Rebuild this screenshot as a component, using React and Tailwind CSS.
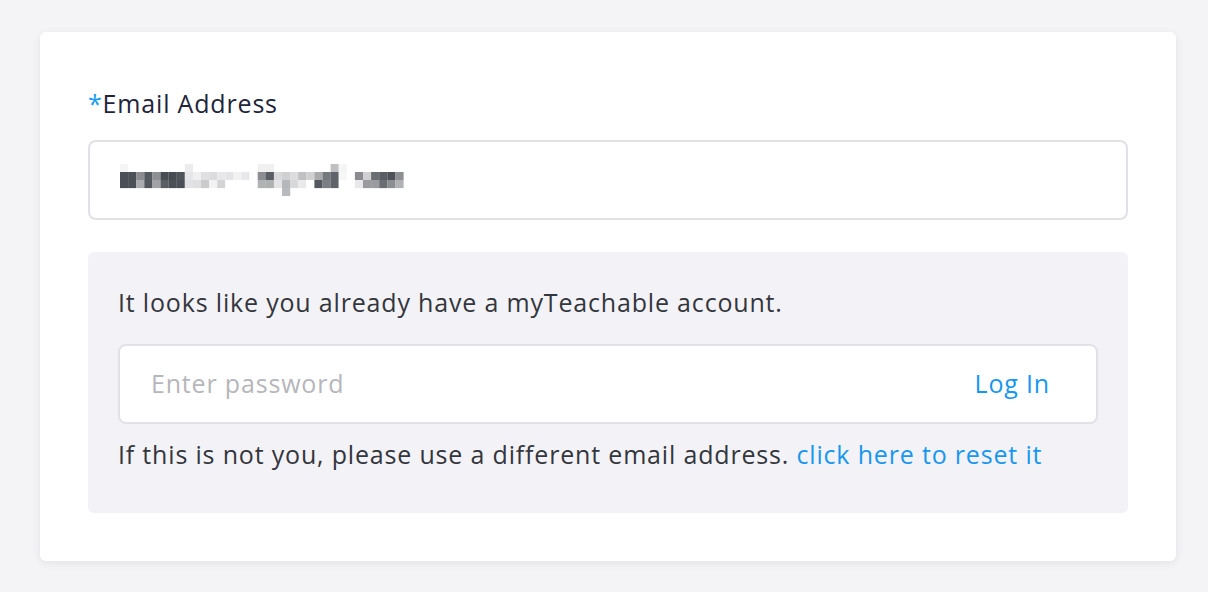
import React from 'react';

// blurred email, drawn as the mosaic it is in the screenshot
const mosaic = [
  { row: 0, cells: { 0: '#f5f5f5', 8: '#ececee', 17: '#f0f0f0', 18: '#f0f0f0', 26: '#c0c0c2', 27: '#f5f5f5' } },
  {
    row: 1,
    cells: ['#4b4f57', '#4b4f57', '#8a8c90', '#555960', '#8d8f93', '#474b53', '#474b53', '#50545b', '#e6e6e8', '#f0f0f1', '#e0e0e2', '#dcdcde', '#e8e8ea', '#e4e4e6', '#f2f2f3', '#e8e8ea', '#ffffff', '#8b8d90', '#5a5e64', '#d8d8da', '#d0d0d2', '#dcdcde', '#c0c0c2', '#d0d0d2', '#aaaaac', '#75787c', '#60646a', '#f7f7f7', '#ffffff', '#8a8c90', '#d0d0d2', '#6a6d72', '#5a5e64', '#4e5258', '#8d8f93'],
  },
  {
    row: 2,
    cells: ['#4b4f57', '#4b4f57', '#a9abae', '#53575e', '#a0a2a5', '#5a5e64', '#4b4f57', '#4b4f57', '#e2e2e4', '#e0e0e2', '#cbcbcd', '#f2f2f2', '#d4d4d6', '#ffffff', '#ffffff', '#ffffff', '#ffffff', '#b0b2b4', '#aeb0b2', '#e4e4e6', '#b6b7ba', '#d8d8da', '#eaeaeb', '#ffffff', '#55595f', '#7b7e82', '#5f6368', '#ffffff', '#ffffff', '#e8e8ea', '#999b9e', '#9a9c9f', '#6a6d72', '#8c8e92', '#b0b2b4'],
  },
  { row: 3, cells: { 20: '#b9babd' } },
];

function BlurredEmail() {
  const rects = [];
  mosaic.forEach(({ row, cells }) => {
    Object.entries(cells).forEach(([col, fill]) => {
      rects.push(<rect key={`${row}-${col}`} x={col * 8.1} y={row * 8} width="8.2" height="8.1" fill={fill} />);
    });
  });
  return (
    <svg width="284" height="32" viewBox="0 0 284 32" className="block">
      {rects}
    </svg>
  );
}

export default function App() {
  return (
    <div className="min-h-[592px] bg-[#f4f4f6] pl-10 pr-8 pt-8 pb-8" style={{ fontFamily: '"Open Sans", Lato, sans-serif' }}>
      <div className="rounded-[6px] bg-white px-12 pt-[54px] pb-12 shadow-[0_2px_8px_rgba(30,30,60,0.08)]">
        <label className="block text-[25px] leading-[34px] tracking-[0.033em] text-[#22243a]">
          <span className="text-[#1a9cf0]">*</span>Email Address
        </label>
        <div className="mt-[20px] flex h-20 items-center rounded-[8px] border-2 border-[#e1e1e6] px-[30px]">
          <div>
            <BlurredEmail />
          </div>
        </div>

        <div className="mt-8 rounded-[6px] bg-[#f3f3f7] px-[30px] pt-[34px] pb-[43px] text-[25px] tracking-[0.033em]">
          <p className="leading-8 text-[#33363d]">
            It looks like you already have a myTeachable account.
          </p>
          <div className="mt-[26px] flex h-20 items-center justify-between rounded-[8px] border-2 border-[#e1e1e6] bg-white pl-[31px] pr-[46px]">
            <span className="text-[#b6b6bb]">Enter password</span>
            <button className="text-[#1797ef]">Log In</button>
          </div>
          <p className="mt-[14px] leading-8 text-[#33363d]">
            If this is not you, please use a different email address.{' '}
            <a className="text-[#1797ef]" href="#">click here to reset it</a>
          </p>
        </div>
      </div>
    </div>
  );
}
